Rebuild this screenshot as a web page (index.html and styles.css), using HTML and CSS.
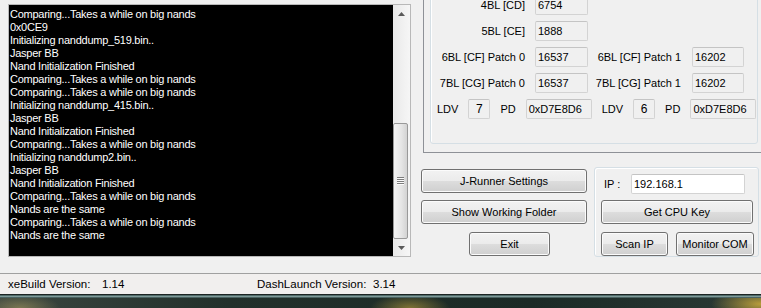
FILE: index.html
```html
<!DOCTYPE html>
<html>
<head>
<meta charset="utf-8">
<link rel="stylesheet" href="styles.css">
</head>
<body>
<div class="window">
  <div class="main">
    <div class="log">
      <div class="log-text">
        <div>Comparing...Takes a while on big nands</div>
        <div>0x0CE9</div>
        <div>Initializing nanddump_519.bin..</div>
        <div>Jasper BB</div>
        <div>Nand Initialization Finished</div>
        <div>Comparing...Takes a while on big nands</div>
        <div>Comparing...Takes a while on big nands</div>
        <div>Initializing nanddump_415.bin..</div>
        <div>Jasper BB</div>
        <div>Nand Initialization Finished</div>
        <div>Comparing...Takes a while on big nands</div>
        <div>Initializing nanddump2.bin..</div>
        <div>Jasper BB</div>
        <div>Nand Initialization Finished</div>
        <div>Comparing...Takes a while on big nands</div>
        <div>Nands are the same</div>
        <div>Comparing...Takes a while on big nands</div>
        <div>Nands are the same</div>
      </div>
      <div class="vscroll">
        <div class="sb-btn"><svg width="7" height="4" viewBox="0 0 7 4"><path d="M3.5 0 L7 4 L0 4 Z" fill="#5a5a5a"/></svg></div>
        <div class="sb-track"><div class="thumb"><div class="grip"></div></div></div>
        <div class="sb-btn"><svg width="7" height="4" viewBox="0 0 7 4"><path d="M0 0 L7 0 L3.5 4 Z" fill="#5a5a5a"/></svg></div>
      </div>
    </div>
    <div class="right">
      <div class="page">
        <div class="group">
          <div class="bl-grid">
            <div class="lbl">4BL [CD]</div><div class="val">6754</div><div></div><div></div>
            <div class="lbl">5BL [CE]</div><div class="val">1888</div><div></div><div></div>
            <div class="lbl">6BL [CF] Patch 0</div><div class="val">16537</div><div class="lbl">6BL [CF] Patch 1</div><div class="val val-r">16202</div>
            <div class="lbl">7BL [CG] Patch 0</div><div class="val">16537</div><div class="lbl">7BL [CG] Patch 1</div><div class="val val-r">16202</div>
          </div>
          <div class="ldv-row">
            <span>LDV</span><div class="box ldv">7</div>
            <span>PD</span><div class="box pd">0xD7E8D6</div>
            <span>LDV</span><div class="box ldv">6</div>
            <span>PD</span><div class="box pd">0xD7E8D6</div>
          </div>
        </div>
      </div>
      <div class="actions">
        <div class="btn-stack">
          <div class="btn">J-Runner Settings</div>
          <div class="btn">Show Working Folder</div>
          <div class="btn exit">Exit</div>
        </div>
        <div class="net">
          <div class="ip-row"><span class="ip-label">IP :</span><div class="ip-box">192.168.1</div></div>
          <div class="btn cpu">Get CPU Key</div>
          <div class="scan-row"><div class="btn scan">Scan IP</div><div class="btn monitor">Monitor COM</div></div>
        </div>
      </div>
    </div>
  </div>
  <div class="status">
    <span>xeBuild Version:</span><span>1.14</span><span>DashLaunch Version:</span><span>3.14</span>
  </div>
  <div class="wallpaper"></div>
</div>
</body>
</html>
```
FILE: styles.css
```css
html, body { margin: 0; padding: 0; }
body {
  width: 761px;
  height: 308px;
  overflow: hidden;
  background: #f0f0f0;
  font-family: "Liberation Sans", Arial, sans-serif;
  font-size: 11px;
  color: #000;
}
.window { display: flex; flex-direction: column; height: 308px; }
.main { display: flex; align-items: flex-start; height: 273px; flex: none; }

.log {
  margin: 4px 0 0 8px;
  width: 403px;
  height: 253px;
  box-sizing: border-box;
  border: 1px solid #b8b8b8;
  display: flex;
  flex: none;
}
.log-text {
  flex: 1;
  background: #000;
  color: #fff;
  padding: 3px 0 0 1px;
  line-height: 13px;
  letter-spacing: -0.25px;
  white-space: nowrap;
  overflow: hidden;
}
.vscroll {
  width: 17px;
  flex: none;
  display: flex;
  flex-direction: column;
  background: linear-gradient(to right, #e9e9e9, #f6f6f6);
}
.sb-btn { height: 17px; display: flex; align-items: center; justify-content: center; flex: none; }
.sb-btn svg { display: block; }
.sb-track { flex: 1; display: flex; flex-direction: column; justify-content: flex-end; }
.thumb {
  height: 116px;
  width: 15px;
  box-sizing: border-box;
  border: 1px solid #999;
  border-radius: 2px;
  background: linear-gradient(to right, #f4f4f4, #e6e6e6 55%, #d3d3d3);
  display: flex;
  align-items: center;
  justify-content: center;
}
.grip {
  width: 7px;
  height: 8px;
  background: repeating-linear-gradient(to bottom, #7c7c7c 0 1px, #fbfbfb 1px 2px);
}

.right { margin-left: 10px; width: 340px; flex: none; }
.page {
  margin: -40px 0 0 2px;
  width: 331px;
  border: 1px solid #8e9197;
  border-right: 0;
  padding: 6px 0 8px 6px;
}
.group {
  width: 328px;
  box-sizing: border-box;
  border: 1px solid #d5dfe5;
  border-radius: 3px;
  box-shadow: inset 1px 1px 0 #fff;
  padding: 27px 0 24px 0;
}
.bl-grid {
  display: grid;
  grid-template-columns: 94px 63px 93px 63px;
  grid-auto-rows: 20px;
  row-gap: 6px;
  align-items: center;
}
.lbl { text-align: right; white-space: nowrap; }
.val, .box {
  height: 20px;
  box-sizing: border-box;
  border: 1px solid #d3d3d3;
  border-top-color: #c4c4c4;
  border-radius: 2px;
  padding-left: 2px;
  line-height: 18px;
  white-space: nowrap;
}
.val { margin-left: 10px; width: 53px; }
.val-r { margin-left: 11px; width: 52px; }
.ldv-row {
  display: flex;
  align-items: center;
  gap: 10px;
  height: 20px;
  margin-top: 6px;
  padding-left: 6px;
}
.ldv { width: 22px; padding-left: 0; text-align: center; font-size: 12px; }
.pd { width: 66px; }

.actions { display: flex; align-items: flex-start; }
.btn-stack {
  display: flex;
  flex-direction: column;
  width: 166px;
  margin-top: 16px;
  gap: 7px;
  flex: none;
}
.btn {
  height: 24px;
  box-sizing: border-box;
  border: 1px solid #707070;
  border-radius: 3px;
  background: linear-gradient(to bottom, #f2f2f2 0%, #ebebeb 50%, #dddddd 50%, #cfcfcf 100%);
  box-shadow: inset 0 0 0 1px #fbfbfb;
  display: flex;
  align-items: center;
  justify-content: center;
  white-space: nowrap;
}
.exit { width: 81px; margin: 1px 0 0 48px; }
.net {
  margin: 14px 0 0 7px;
  width: 165px;
  height: 90px;
  box-sizing: border-box;
  border: 1px solid #d5dfe5;
  border-radius: 3px;
  box-shadow: inset 1px 1px 0 #fff;
  padding: 6px 0 0 6px;
  flex: none;
}
.ip-row { display: flex; align-items: center; height: 20px; }
.ip-label { margin-left: 3px; width: 27px; }
.ip-box {
  width: 114px;
  height: 20px;
  box-sizing: border-box;
  background: #fff;
  border: 1px solid #d3d3d3;
  border-top-color: #c4c4c4;
  border-radius: 2px;
  padding-left: 2px;
  line-height: 18px;
}
.cpu { width: 152px; margin-top: 6px; }
.scan-row { display: flex; gap: 8px; margin-top: 8px; }
.scan { width: 67px; }
.monitor { width: 78px; }

.status {
  height: 21px;
  flex: none;
  box-sizing: border-box;
  border-top: 1px solid #a0a0a0;
  background: #f1efee;
  display: grid;
  grid-template-columns: 94px 155px 116px auto;
  align-items: center;
  padding-left: 8px;
  font-size: 11.5px;
}
.wallpaper {
  height: 14px;
  flex: none;
  background:
    linear-gradient(to bottom, #1c2423 0 1px, #4f6a68 1px 2px, #7f9a99 2px 3px, #4a6361 3px 4px, rgba(0,0,0,0) 4px),
    radial-gradient(ellipse 40px 14px at 20px 14px, rgba(150,140,90,.7), rgba(0,0,0,0)),
    radial-gradient(ellipse 40px 14px at 410px 14px, rgba(190,160,60,.6), rgba(0,0,0,0)),
    radial-gradient(ellipse 50px 16px at 761px 10px, rgba(210,175,60,.85), rgba(0,0,0,0)),
    linear-gradient(to right, #3a4640, #22302b 30%, #1b2a26 70%, #2b3a36);
}
```
